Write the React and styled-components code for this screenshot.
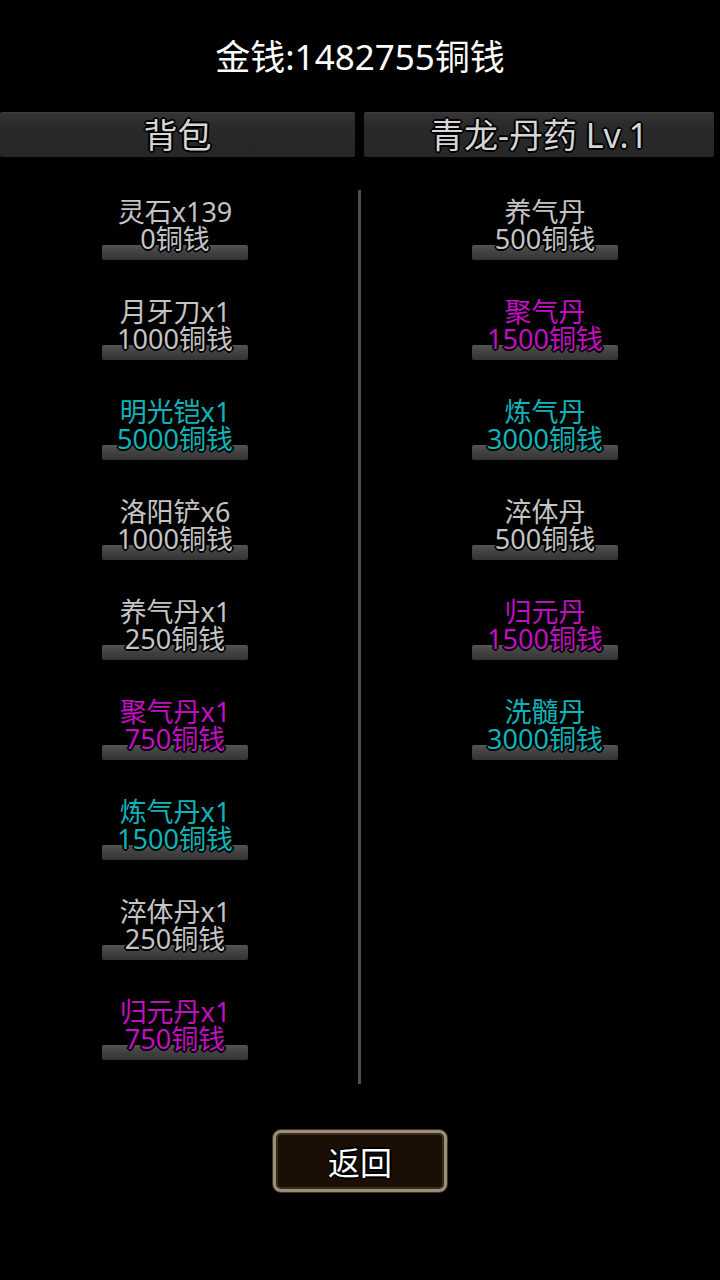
import React from "react";
import styled, { createGlobalStyle } from "styled-components";

const GlobalStyle = createGlobalStyle`
  html, body {
    margin: 0;
    padding: 0;
    background: #000;
  }
  body {
    font-family: "Noto Sans", "Noto Sans CJK SC", sans-serif;
  }
`

const outline = `
  -1px -1px 0 #000, 1px -1px 0 #000, -1px 1px 0 #000, 1px 1px 0 #000,
  0 2px 0 #000, 2px 0 0 #000, 0 -2px 0 #000, -2px 0 0 #000
`

const Page = styled.div`
  width: 720px;
  height: 1280px;
  background: #000;
  display: flex;
  flex-direction: column;
  align-items: center;
`

const Money = styled.div`
  margin-top: 37px;
  height: 40px;
  line-height: 40px;
  font-size: 35px;
  color: #fff;
`

const TabRow = styled.div`
  margin-top: 35px;
  width: 100%;
  display: flex;
`

const Tab = styled.div`
  width: ${p => p.w}px;
  margin-left: ${p => p.ml || 0}px;
  height: 45px;
  line-height: 44px;
  text-align: center;
  background: linear-gradient(#353535, #2a2a2a 30%, #262626);
  border-top: 1px solid #3c3c3c;
  border-radius: 2px;
  color: #d6d6d6;
  font-size: 34px;
  text-shadow: ${outline};
  box-sizing: border-box;
`

const Columns = styled.div`
  margin-top: 33px;
  width: 100%;
  height: 894px;
  display: flex;
`

const Column = styled.div`
  width: 350px;
  padding-top: 8px;
  display: flex;
  flex-direction: column;
`

const Divider = styled.div`
  width: 3px;
  margin: 0 9px 0 8px;
  background: #4e4e4e;
`

const Item = styled.div`
  flex-shrink: 0;
  height: 100px;
  display: flex;
  flex-direction: column;
  align-items: center;
`

const Line = styled.div`
  position: relative;
  z-index: 1;
  font-size: 27px;
  line-height: 27px;
  height: 27px;
  color: ${p => p.color};
  text-shadow: ${outline};
  white-space: nowrap;
`

const Bar = styled.div`
  margin-top: -7px;
  width: 146px;
  height: 15px;
  border-radius: 2px;
  background: linear-gradient(#555, #444 40%, #333);
`

const BackButton = styled.div`
  margin-top: 46px;
  width: 174px;
  height: 62px;
  box-sizing: border-box;
  border: 3px solid #9c8f76;
  border-radius: 8px;
  background: #1b0e05;
  box-shadow: inset 0 0 0 2px #3a2e20, 0 0 0 1px #3d3426;
  display: flex;
  align-items: center;
  justify-content: center;
  color: #fff;
  font-size: 32px;
  text-shadow: ${outline};
`

const GRAY = '#c4c4c4'
const PURPLE = '#c010c0'
const CYAN = '#10b4b8'

const bag = [
  ['灵石x139', '0铜钱', GRAY],
  ['月牙刀x1', '1000铜钱', GRAY],
  ['明光铠x1', '5000铜钱', CYAN],
  ['洛阳铲x6', '1000铜钱', GRAY],
  ['养气丹x1', '250铜钱', GRAY],
  ['聚气丹x1', '750铜钱', PURPLE],
  ['炼气丹x1', '1500铜钱', CYAN],
  ['淬体丹x1', '250铜钱', GRAY],
  ['归元丹x1', '750铜钱', PURPLE],
]

const shop = [
  ['养气丹', '500铜钱', GRAY],
  ['聚气丹', '1500铜钱', PURPLE],
  ['炼气丹', '3000铜钱', CYAN],
  ['淬体丹', '500铜钱', GRAY],
  ['归元丹', '1500铜钱', PURPLE],
  ['洗髓丹', '3000铜钱', CYAN],
]

const renderItems = list => list.map(([name, price, color], i) => (
  <Item key={i}>
    <Line color={color}>{name}</Line>
    <Line color={color}>{price}</Line>
    <Bar />
  </Item>
))

export default function App() {
  return (
    <Page>
      <GlobalStyle />
      <Money>金钱:1482755铜钱</Money>
      <TabRow>
        <Tab w={355}>背包</Tab>
        <Tab w={350} ml={9}>青龙-丹药 Lv.1</Tab>
      </TabRow>
      <Columns>
        <Column>{renderItems(bag)}</Column>
        <Divider />
        <Column>{renderItems(shop)}</Column>
      </Columns>
      <BackButton>返回</BackButton>
    </Page>
  )
}
